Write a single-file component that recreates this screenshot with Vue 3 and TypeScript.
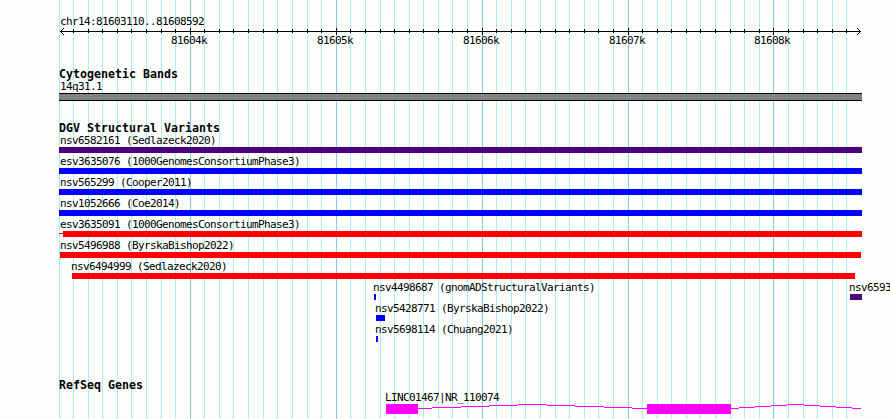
<script setup lang="ts">
interface Feature {
  name: string
  labelX: number
  start: number
  end: number
  color: string
  lead?: number
}

const purple = '#4b0082'
const blue = '#0000ff'
const red = '#ff0000'

const gridLines: number[] = [
  59, 73, 88, 102, 117, 131, 146, 161, 175, 190, 204, 219, 233, 248, 263, 277, 292, 307, 321, 336,
  350, 365, 380, 394, 409, 423, 438, 452, 467, 482, 496, 511, 525, 540, 555, 569, 584, 598, 613, 628,
  642, 657, 671, 686, 700, 715, 730, 744, 759, 773, 788, 803, 817, 832, 846,
]
const majors: { x: number; label: string }[] = [
  { x: 190, label: '81604k' },
  { x: 336, label: '81605k' },
  { x: 482, label: '81606k' },
  { x: 628, label: '81607k' },
  { x: 773, label: '81608k' },
]
const isMajor = (x: number): boolean => majors.some((m) => m.x === x)
const ticks = gridLines.filter((x) => x > 59)

const rows: Feature[][] = [
  [{ name: 'nsv6582161 (Sedlazeck2020)', labelX: 60, start: 59, end: 862, color: purple }],
  [{ name: 'esv3635076 (1000GenomesConsortiumPhase3)', labelX: 60, start: 59, end: 862, color: blue }],
  [{ name: 'nsv565299 (Cooper2011)', labelX: 60, start: 59, end: 862, color: blue }],
  [{ name: 'nsv1052666 (Coe2014)', labelX: 60, start: 59, end: 862, color: blue }],
  [{ name: 'esv3635091 (1000GenomesConsortiumPhase3)', labelX: 60, start: 63, end: 862, color: red, lead: 59 }],
  [{ name: 'nsv5496988 (ByrskaBishop2022)', labelX: 60, start: 60, end: 861, color: red }],
  [{ name: 'nsv6494999 (Sedlazeck2020)', labelX: 71, start: 72, end: 855, color: red }],
  [
    { name: 'nsv4498687 (gnomADStructuralVariants)', labelX: 373, start: 374, end: 376, color: blue },
    { name: 'nsv6593', labelX: 849, start: 850, end: 862, color: purple },
  ],
  [{ name: 'nsv5428771 (ByrskaBishop2022)', labelX: 375, start: 376, end: 385, color: blue }],
  [{ name: 'nsv5698114 (Chuang2021)', labelX: 375, start: 376, end: 378, color: blue }],
]

// Intron steps: [x start, x end, y offset inside the gene glyph]
const introns: [number, number, number][] = [
  [418, 432, 4], [432, 461, 3], [461, 489, 2], [489, 518, 1], [518, 547, 0],
  [547, 575, 1], [575, 604, 2], [604, 632, 3], [632, 647, 4],
  [731, 739, 4], [739, 755, 3], [755, 771, 2], [771, 787, 1], [787, 804, 0],
  [804, 820, 1], [820, 836, 2], [836, 852, 3], [852, 861, 4],
]
</script>

<template>
  <main class="browser">
    <svg class="grid" width="890" height="419" shape-rendering="crispEdges" aria-hidden="true">
      <rect
        v-for="x in gridLines"
        :key="x"
        :x="x"
        y="0"
        width="1"
        height="419"
        :class="isMajor(x) ? 'major' : 'minor'"
      />
    </svg>

    <header class="ruler">
      <div class="label inset">chr14:81603110..81608592</div>
      <svg class="axis" width="890" height="7" shape-rendering="crispEdges">
        <rect x="60" y="3" width="801" height="1" />
        <rect
          v-for="x in ticks"
          :key="x"
          :x="x"
          :y="isMajor(x) ? 0 : 1"
          width="1"
          :height="isMajor(x) ? 7 : 4"
        />
        <path d="M61 2h1v-1h1v-1h1v1h-1v1h-1v1h-1zM61 4h1v1h1v1h1v1h-1v-1h-1v-1h-1z" />
        <path d="M860 2h-1v-1h-1v-1h-1v1h1v1h1v1h1zM860 4h-1v1h-1v1h-1v1h1v-1h1v-1h1z" />
      </svg>
      <div class="scale">
        <span
          v-for="m in majors"
          :key="m.x"
          class="label"
          :style="{ marginLeft: `${m.x - 19}px` }"
        >{{ m.label }}</span>
      </div>
    </header>

    <section class="bands">
      <h2>Cytogenetic Bands</h2>
      <div class="label inset">14q31.1</div>
      <div class="band"></div>
    </section>

    <section class="variants">
      <h2>DGV Structural Variants</h2>
      <div v-for="(row, i) in rows" :key="i" class="row">
        <div v-for="f in row" :key="f.name" class="feature">
          <div class="label" :style="{ marginLeft: `${f.labelX}px` }">{{ f.name }}</div>
          <svg width="890" height="6" shape-rendering="crispEdges">
            <rect v-if="f.lead" :x="f.lead" y="2" :width="f.start - f.lead" height="1" :fill="f.color" />
            <rect :x="f.start" y="0" :width="f.end - f.start" height="6" :fill="f.color" />
          </svg>
        </div>
      </div>
    </section>

    <section class="genes">
      <h2>RefSeq Genes</h2>
      <div class="label gene-name">LINC01467|NR_110074</div>
      <svg class="gene" width="890" height="10" shape-rendering="crispEdges">
        <rect x="386" y="0" width="32" height="10" />
        <rect x="647" y="0" width="84" height="10" />
        <rect v-for="s in introns" :key="s[0]" :x="s[0]" :y="s[2]" :width="s[1] - s[0]" height="1" />
      </svg>
    </section>
  </main>
</template>

<style>
body {
  margin: 0;
  background: #fdfffc;
}
</style>

<style scoped>
.browser {
  position: relative;
  isolation: isolate;
  box-sizing: border-box;
  width: 890px;
  height: 419px;
  padding-top: 15px;
  overflow: hidden;
  color: #000;
  font: 11px/13px 'DejaVu Sans Mono', monospace;
}
.grid {
  position: absolute;
  inset: 0;
  z-index: -1;
}
.minor {
  fill: #afeeee;
}
.major {
  fill: #87ceeb;
}
svg {
  display: block;
}
.label {
  height: 13px;
  letter-spacing: calc(6px - 1ch);
  white-space: pre;
}
.inset {
  margin-left: 60px;
}
h2 {
  height: 12px;
  margin: 0 0 0 59px;
  font: bold 11.6px/13px 'DejaVu Sans Mono', monospace;
  letter-spacing: calc(7px - 1ch);
  white-space: pre;
}
.scale,
.row {
  display: grid;
}
.scale {
  margin-top: -1px;
}
.scale > .label,
.feature {
  grid-area: 1 / 1;
}
.bands {
  margin-top: 21px;
}
.band {
  box-sizing: border-box;
  width: 803px;
  height: 8px;
  margin-left: 59px;
  border: solid #000;
  border-width: 1px 0;
  background: #848284;
}
.variants {
  margin-top: 21px;
}
.row {
  height: 21px;
}
.genes {
  margin-top: 35px;
}
.gene-name {
  margin-left: 385px;
}
.gene {
  fill: #ff00ff;
}
</style>
